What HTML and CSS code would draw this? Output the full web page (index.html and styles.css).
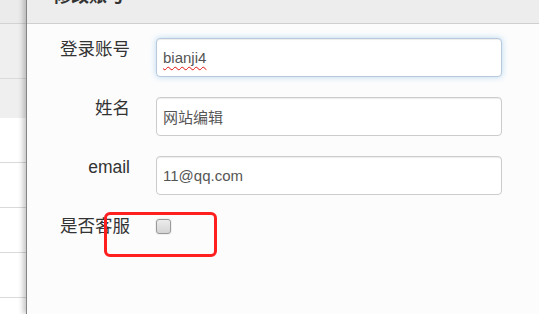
FILE: index.html
```html
<!DOCTYPE html>
<html lang="zh-CN">
<head>
  <meta charset="UTF-8">
  <title>修改账号</title>
  <link rel="stylesheet" href="styles.css">
</head>
<body>
  <div class="page-table">
    <div class="tr tr-head"></div>
    <div class="tr tr-gray"></div>
    <div class="tr tr-gray tr-last"></div>
    <div class="tr"></div>
    <div class="tr"></div>
    <div class="tr"></div>
    <div class="tr"></div>
    <div class="tr"></div>
  </div>

  <div class="modal">
    <div class="modal-header">
      <h4 class="modal-title">修改账号</h4>
    </div>
    <div class="modal-body">
      <div class="form-row">
        <label class="control-label">登录账号</label>
        <div class="field focused"><span class="misspelled">bianji4</span></div>
      </div>
      <div class="form-row">
        <label class="control-label">姓名</label>
        <div class="field">网站编辑</div>
      </div>
      <div class="form-row">
        <label class="control-label">email</label>
        <div class="field">11@qq.com</div>
      </div>
      <div class="form-row">
        <label class="control-label">是否客服</label>
        <div class="check-cell"><span class="checkbox"></span></div>
      </div>
    </div>
    <!-- annotation box drawn on the screenshot -->
    <div class="highlight"></div>
  </div>
</body>
</html>
```

FILE: styles.css
```css
*, *::before, *::after { margin: 0; padding: 0; box-sizing: border-box; }
body {
  display: flex;
  height: 314px;
  overflow: hidden;
  background: #fff;
  font-family: "Liberation Sans", "Noto Sans CJK SC", sans-serif;
  color: #333;
}
/* table of the page behind the modal */
.page-table {
  width: 26px;
  flex-shrink: 0;
}
.tr {
  height: 45px;
  border-bottom: 1px solid #dadada;
}
.tr-head {
  height: 24px;
  background: #ebebeb;
  border-bottom-color: #d2d2d2;
}
.tr-gray {
  height: 55px;
  background: #efefef;
}
.tr-last {
  height: 39px;
  border-bottom: none;
}
/* modal */
.modal {
  position: relative;
  flex: 1;
  margin-top: -31px;
  background: #fcfcfc;
  border-left: 1px solid #858585;
  box-shadow: -3px 0 5px rgba(0, 0, 0, 0.22);
}
.modal-header {
  padding: 15px 15px 14px 26px;
  background: #ededed;
  border-bottom: 1px solid #cfcfcf;
}
.modal-title {
  font-size: 18px;
  line-height: 25px;
  font-weight: bold;
  color: #333;
}
.modal-body {
  padding-top: 14px;
}
.form-row {
  display: grid;
  grid-template-columns: 103px 346px;
  column-gap: 26px;
  margin-bottom: 20px;
}
.control-label {
  font-size: 17.5px;
  line-height: 23px;
  text-align: right;
  color: #333;
}
.field {
  height: 39px;
  padding: 0 6px;
  display: flex;
  align-items: center;
  background: #fff;
  border: 1px solid #ccc;
  border-radius: 4px;
  box-shadow: inset 0 1px 1px rgba(0, 0, 0, 0.075);
  font-size: 15px;
  color: #555;
}
.field.focused {
  border-color: #b9c9dc;
  box-shadow: inset 0 1px 1px rgba(0, 0, 0, 0.075), 0 0 6px rgba(102, 175, 233, 0.45);
}
.misspelled {
  text-decoration: underline wavy #e01010;
  text-decoration-thickness: 1px;
  text-underline-offset: 3px;
}
.check-cell {
  padding-top: 4px;
}
.checkbox {
  display: block;
  width: 15px;
  height: 15px;
  border: 1px solid #9a9a9a;
  border-radius: 3px;
  background: linear-gradient(#ececec, #d4d4d4);
  box-shadow: 0 0 0 1px #f0f0f0;
}
.highlight {
  position: absolute;
  left: 77px;
  top: 243px;
  width: 113px;
  height: 45px;
  border: 3px solid #ff1f1f;
  border-radius: 6px;
}
```
